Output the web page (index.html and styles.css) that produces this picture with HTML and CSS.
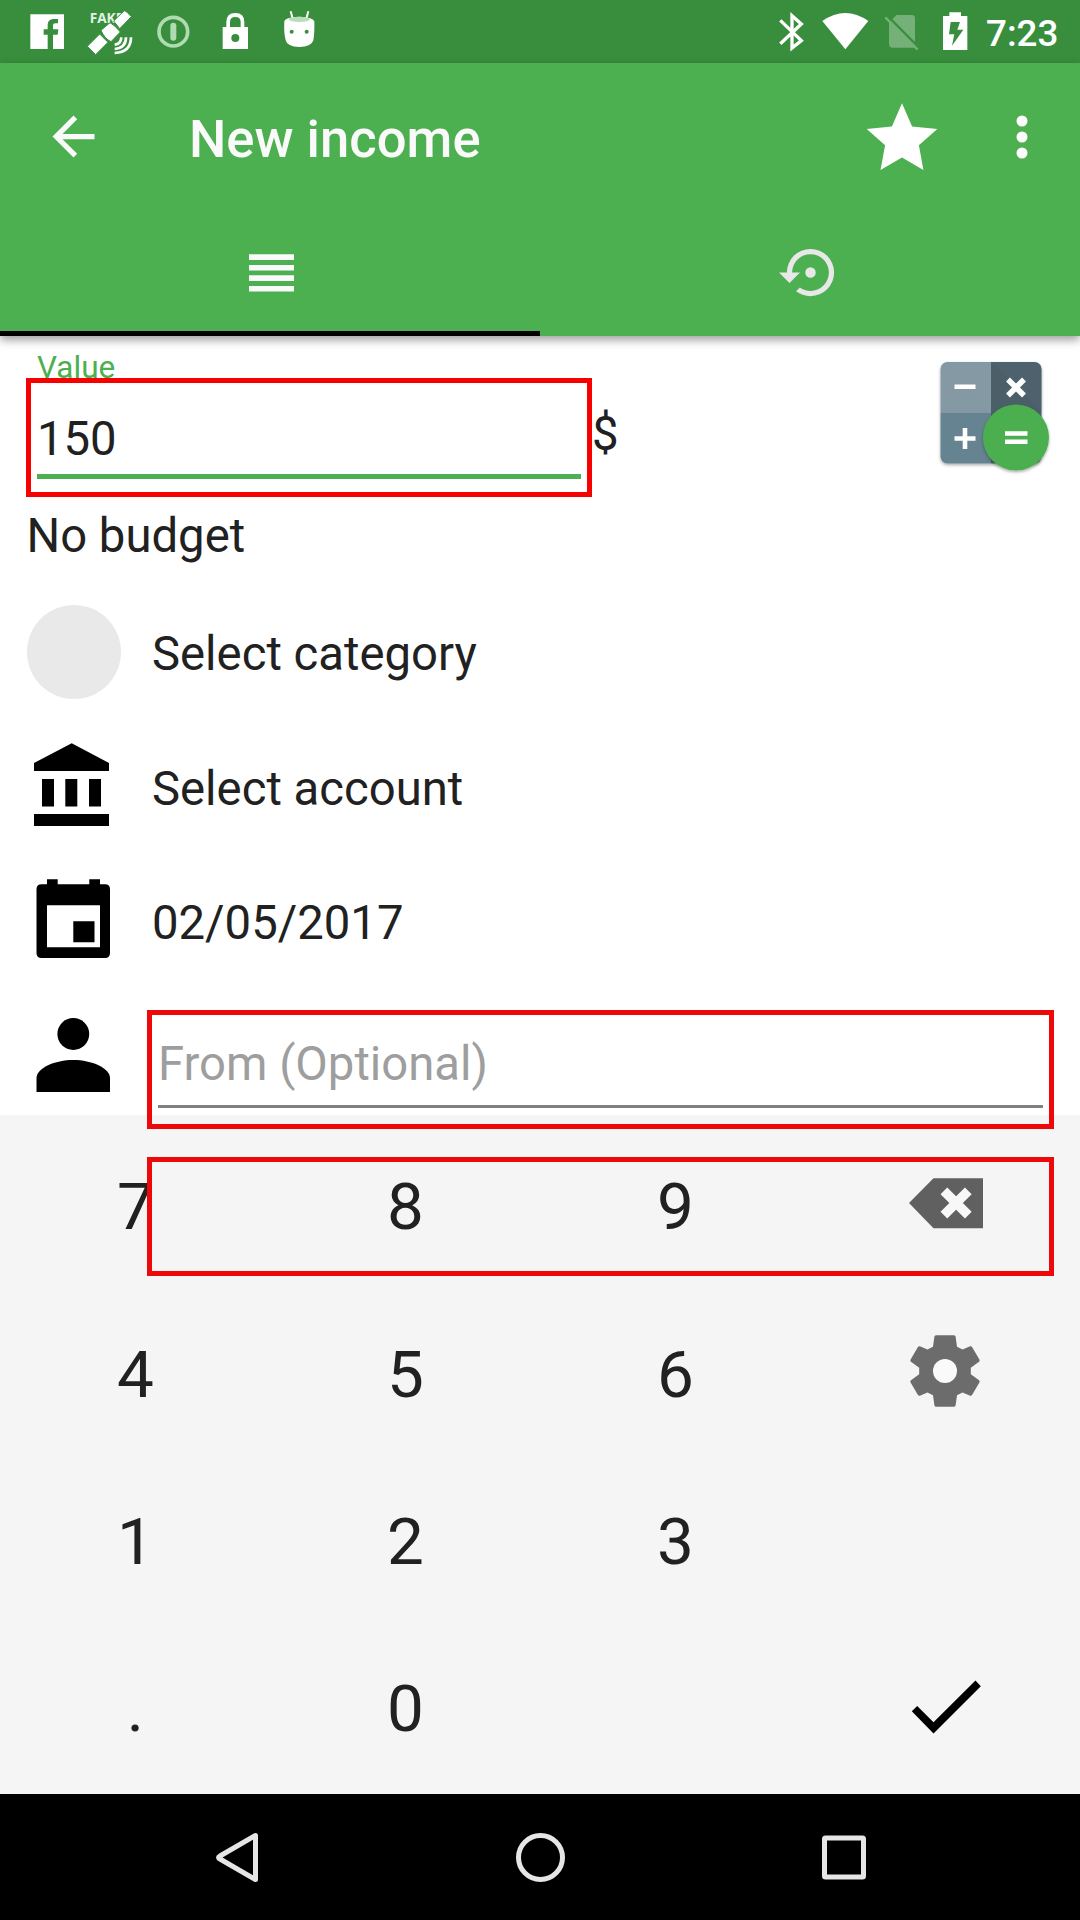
FILE: index.html
```html
<!DOCTYPE html>
<html lang="en">
<head>
<meta charset="utf-8">
<title>New income</title>
<link rel="stylesheet" href="styles.css">
</head>
<body>
<div class="screen">
  <header class="status-bar">
    <svg class="status-left" viewBox="0 0 1020 189" width="340" height="63">
      <path fill="#fff" d="M91 43H192V147H159V104H173L175 88H159V77Q159 70 167 70H174V57H160Q143 58 143 75V88H131V104H143V147H91Z"/>
      <text class="fake-label" x="269" y="69">FAKE</text>
      <g fill="#fff" stroke="#388e3c" stroke-width="3">
        <path d="M262 139L299 102L324 127L287 164Z"/>
        <path d="M341 63L373 32Q380 34 394 50L359 86Z"/>
        <path d="M303 91L330 68Q345 76 361 96L333 125Q314 117 303 91Z"/>
      </g>
      <g fill="none" stroke="#fff" stroke-width="8">
        <path d="M364 112Q363 132 344 134M378 112Q378 144 344 147M393 112Q393 157 344 159"/>
      </g>
      <g stroke="#afdbb1" fill="none"><circle cx="520" cy="95" r="43" stroke-width="11"/><path d="M520 77V113" stroke-width="18" stroke-linecap="round"/></g>
      <path fill="#fff" fill-rule="evenodd" d="M668 81H679V66Q679 39 706 39T733 66V81H744V147H668ZM690 81H722V66Q722 51 706 51T690 66ZM706 102A12 12 0 1 0 706 126A12 12 0 1 0 706 102Z"/>
      <path d="M872 34L878 56M925 34L919 56" stroke="#fff" stroke-width="6"/>
      <path fill="#fff" d="M853 64Q854 52 898 50Q941 52 943 64Q944 99 940 121Q935 140 898 141Q861 140 857 121Q851 99 853 64Z"/>
      <ellipse cx="898" cy="58" rx="32" ry="8" fill="#b9dcb9"/>
      <g fill="#388e3c"><circle cx="875" cy="95" r="6"/><circle cx="920" cy="95" r="6"/></g>
    </svg>
    <svg class="status-right" viewBox="90 0 606 189" width="202" height="63">
      <path fill="none" stroke="#fff" stroke-width="10" d="M121 61L184 122L156 144V47L184 72L121 131"/>
      <path fill="#fff" d="M247 63Q316 15 385 63L316 148Z"/>
      <path fill="#74b077" d="M447 67L470 45H515Q525 45 525 55V143H458Q447 143 447 132Z"/>
      <path d="M443 48L539 145" stroke="#388e3c" stroke-width="7"/>
      <path d="M436 52L533 149" stroke="#74b077" stroke-width="7"/>
      <path fill="#fff" fill-rule="evenodd" d="M609 48H628V37H663V48H682V150H609ZM632 66L627 103H643L636 137L670 89H652L660 66Z"/>
    </svg>
    <span class="clock">7:23</span>
  </header>

  <div class="app-bar">
    <div class="toolbar">
      <svg width="63" height="63" viewBox="0 0 24 24" fill="#fafafa"><path d="M20 11H7.83l5.59-5.59L12 4l-8 8 8 8 1.41-1.41L7.83 13H20z"/></svg>
      <h1 class="title">New income</h1>
      <svg class="star" width="72" height="70" viewBox="865.5 101.5 72 70" fill="#fff"><path d="M901.5 102.7L911.6 126L936.8 128.5L918.4 144.7L922.9 169.5L901.5 157L880 169.5L884.6 144.7L866.2 128.5L891.4 126Z"/></svg>
      <svg width="12" height="44" viewBox="0 0 12 44" fill="#fff"><circle cx="6" cy="6" r="5.5"/><circle cx="6" cy="22" r="5.5"/><circle cx="6" cy="38" r="5.5"/></svg>
    </div>
    <nav class="tabs">
      <div class="tab tab-active">
        <svg width="45" height="38" viewBox="0 0 45 38" fill="#fafafa"><path d="M0 .3h45v5.6H0zM0 11h45v5.6H0zM0 21.3h45v5.6H0zM0 32h45v5.6H0z"/></svg>
      </div>
      <div class="tab tab-history">
        <svg width="63" height="63" viewBox="0 0 24 24" fill="#e8e8e8"><path d="M12 3A9 9 0 0 0 3 12H0L4 16L8 12H5A7 7 0 1 1 12 19C10.5 19 9.09 18.5 7.94 17.7L6.5 19.14C8.04 20.3 9.94 21 12 21A9 9 0 0 0 12 3M14 12A2 2 0 1 0 10 12A2 2 0 1 0 14 12Z"/></svg>
      </div>
    </nav>
  </div>

  <main class="form">
    <section class="amount">
      <div class="amount-field">
        <label class="amount-label">Value</label>
        <div class="amount-value">150</div>
      </div>
      <span class="currency">$</span>
      <svg class="calculator" width="122" height="122" viewBox="930 354 122 122">
        <defs>
          <clipPath id="calc-tile"><rect x="940.500" y="362" width="101" height="101.500" rx="7"/></clipPath>
          <filter id="soft" x="-20%" y="-20%" width="140%" height="140%"><feDropShadow dx="0" dy="1.5" stdDeviation="1.5" flood-opacity=".35"/></filter>
        </defs>
        <g filter="url(#soft)">
          <g clip-path="url(#calc-tile)">
            <path fill="#8499a3" d="M940 362H991V412.500H940Z"/>
            <path fill="#4b5f69" d="M991 362H1042V464H991Z"/>
            <path fill="#566b75" d="M991 362L1042 412V362Z" opacity=".3"/>
            <path fill="#668391" d="M940 412.500H991V464H940Z"/>
          </g>
        </g>
        <circle cx="1016" cy="437.500" r="33" fill="#4caf50" filter="url(#soft)"/>
        <path fill="none" stroke="#fff" stroke-width="4.600" d="M954.500 386.800H975.500M954.500 438.500H975.500M965 428V449M1005 433.500H1027.500M1005 441.700H1027.500"/>
        <path stroke="#fff" stroke-width="5.500" d="M1008 379.500L1024 395.500M1024 379.500L1008 395.500"/>
      </svg>
    </section>
    <div class="budget">No budget</div>
    <div class="row">
      <span class="avatar"></span>
      <span>Select category</span>
    </div>
    <div class="row row-account">
      <svg class="row-icon" width="94" height="94" viewBox="27 738 94 94"><path d="M71.700 743.300L109 763V771H34V763ZM42 779H54V806.500H42ZM65.300 779H77.300V806.500H65.300ZM89 779H101V806.500H89ZM34 814H109V826H34Z"/></svg>
      <span>Select account</span>
    </div>
    <div class="row">
      <svg class="row-icon" width="94" height="94" viewBox="27 872.700 94 94"><path fill-rule="evenodd" d="M47 879H57.700V884H89.300V879H100V884H105Q110 884 110 889V952.700Q110 957.700 105 957.700H41.500Q36.500 957.700 36.500 952.700V889Q36.500 884 41.500 884H47ZM47 905V947H100V905ZM73.300 921H94.500V942H73.300Z"/></svg>
      <span>02/05/2017</span>
    </div>
    <div class="row row-payer">
      <svg class="row-icon" width="94" height="94" viewBox="27 1006 94 94"><circle cx="73.300" cy="1034" r="15.900"/><path d="M36.500 1092V1078C36.500 1068 55 1060 73.300 1060S110 1068 110 1078V1092Z"/></svg>
      <div class="payer-field">From (Optional)</div>
    </div>
  </main>

  <section class="keypad">
    <div class="key">7</div>
    <div class="key">8</div>
    <div class="key">9</div>
    <div class="key key-erase"><svg width="74" height="52" viewBox="908.500 1177 74 52"><path fill="#606060" d="M908.500 1203L933 1178.200H982.500V1228.200H933Z"/><path stroke="#f8f8f8" stroke-width="9.500" d="M943.400 1190.800L967.800 1215.200M967.800 1190.800L943.400 1215.200"/></svg></div>
    <div class="key">4</div>
    <div class="key">5</div>
    <div class="key">6</div>
    <div class="key key-settings"><svg width="86" height="86" viewBox="0 0 24 24" fill="#6c6c6c"><path fill-rule="evenodd" d="M9.600 2H14.400Q14.850 2 14.950 2.400L15.350 5.200L16.900 6L19 5.100Q19.350 5 19.550 5.300L21.600 8.800Q21.800 9.150 21.500 9.400L19.200 11.100V12.900L21.500 14.600Q21.800 14.850 21.600 15.200L19.550 18.700Q19.350 19 19 18.900L16.900 18L15.350 18.800L14.950 21.600Q14.850 22 14.400 22H9.600Q9.150 22 9.050 21.600L8.650 18.800L7.100 18L5 18.900Q4.650 19 4.450 18.700L2.400 15.200Q2.200 14.850 2.500 14.600L4.800 12.900V11.100L2.500 9.400Q2.200 9.150 2.400 8.800L4.450 5.300Q4.650 5 5 5.100L7.100 6L8.650 5.200L9.050 2.400Q9.150 2 9.600 2Z"/><circle cx="12" cy="12" r="3.350" fill="#fafafa"/></svg></div>
    <div class="key">1</div>
    <div class="key">2</div>
    <div class="key">3</div>
    <div class="key"></div>
    <div class="key">.</div>
    <div class="key">0</div>
    <div class="key"></div>
    <div class="key key-done"><svg width="70" height="54" viewBox="910.500 1679.700 70 54"><path d="M975 1680.300L980.300 1686L933 1733.200L911.300 1711L916.700 1705.700L933 1722Z"/></svg></div>
  </section>

  <footer class="nav-bar">
    <svg viewBox="0 0 1080 126" width="1080" height="126" fill="none" stroke="#e6e6e6" stroke-width="5">
      <path stroke-linejoin="round" d="M255.500 41.500V85.500L220 65Q217 63.500 220 62Z"/>
      <circle cx="540.500" cy="63.500" r="22"/>
      <rect x="824.500" y="44" width="39" height="39" rx="1"/>
    </svg>
  </footer>

  <div class="highlight highlight-value"></div>
  <div class="highlight highlight-payer"></div>
  <div class="highlight highlight-keys"></div>
</div>
</body>
</html>
```
FILE: styles.css
```css
* { box-sizing: border-box; }

body {
  margin: 0;
  background: #fff;
  font-family: Roboto, sans-serif;
  color: #212121;
}

svg { display: block; flex: none; }

.screen {
  position: relative;
  width: 1080px;
  height: 1920px;
  overflow: hidden;
  display: flex;
  flex-direction: column;
}

.status-bar {
  height: 63px;
  background: #388e3c;
  display: flex;
  align-items: center;
}
.status-right { margin-left: 430px; }
.fake-label {
  font: 700 41px "Open Sans", sans-serif;
  fill: #e4f2e5;
}
.clock {
  margin-left: 14px;
  padding-top: 4px;
  font-size: 36.75px;
  font-weight: 500;
  line-height: 60px;
  color: #fff;
}

.app-bar {
  position: relative;
  height: 273px;
  background: #4caf50;
  box-shadow: 0 4px 9px rgba(0, 0, 0, .38);
}
.toolbar {
  height: 147px;
  padding: 0 52px 0 42px;
  display: flex;
  align-items: center;
}
.title {
  margin: 0 auto 0 84px;
  padding-top: 4px;
  font-size: 52.6px;
  font-weight: 500;
  line-height: 62px;
  color: #fafafa;
}
.star { margin-right: 78.5px; }
.tabs { display: grid; grid-template-columns: 1fr 1fr; height: 126px; }
.tab {
  display: flex;
  align-items: center;
  justify-content: center;
}
.tab-active {
  padding: 5px 0 0 3px;
  border-bottom: 5px solid #000;
}
.tab-history { padding-bottom: 1px; }

.form {
  height: 779px;
  font-size: 47.25px;
  line-height: 56px;
}
.amount {
  height: 172px;
  padding: 14px 28px 0 37px;
  display: flex;
  align-items: flex-start;
}
.amount-field { width: 544px; }
.amount-label {
  display: block;
  font-size: 31.5px;
  line-height: 36px;
  color: #4caf50;
}
.amount-value {
  margin-top: 25px;
  height: 67.5px;
  border-bottom: 5px solid #4caf50;
}
.currency { margin: 56px auto 0 11px; }
.calculator { margin-top: 4px; }
.budget { height: 79px; padding-left: 26.5px; }

.row {
  height: 134px;
  padding-left: 27px;
  display: flex;
  align-items: center;
  gap: 31px;
}
.row-account { height: 135px; }
.row-icon { margin-top: -7px; }
.avatar {
  width: 94px;
  height: 94px;
  margin-top: -4px;
  border-radius: 50%;
  background: #e9e9e9;
}
.row-payer {
  height: 125px;
  gap: 37px;
  padding-right: 37px;
  align-items: flex-start;
}
.row-payer .row-icon { margin-top: 16px; }
.payer-field {
  flex: 1;
  height: 118px;
  padding-top: 46px;
  border-bottom: 3px solid #808080;
  color: #9e9e9e;
}

.keypad {
  height: 679px;
  padding-top: 8px;
  background: #f5f5f5;
  display: grid;
  grid-template-columns: repeat(4, 270px);
  grid-template-rows: repeat(4, 167.4px);
}
.key {
  display: flex;
  align-items: center;
  justify-content: center;
  padding-left: 1px;
  font-size: 65.6px;
}
.key-erase { padding-bottom: 7px; }
.key-settings { padding: 0 0 6px; }
.key-done { padding-bottom: 4px; }

.nav-bar { height: 126px; background: #000; }

/* Outlined areas laid over the screen */
.highlight {
  position: absolute;
  left: 147px;
  width: 907px;
  height: 119px;
  border: 5px solid #ed0909;
}
.highlight-value {
  left: 26px;
  top: 378px;
  width: 566px;
  border-color: #f90000;
}
.highlight-payer { top: 1010px; }
.highlight-keys { top: 1157px; }
```
